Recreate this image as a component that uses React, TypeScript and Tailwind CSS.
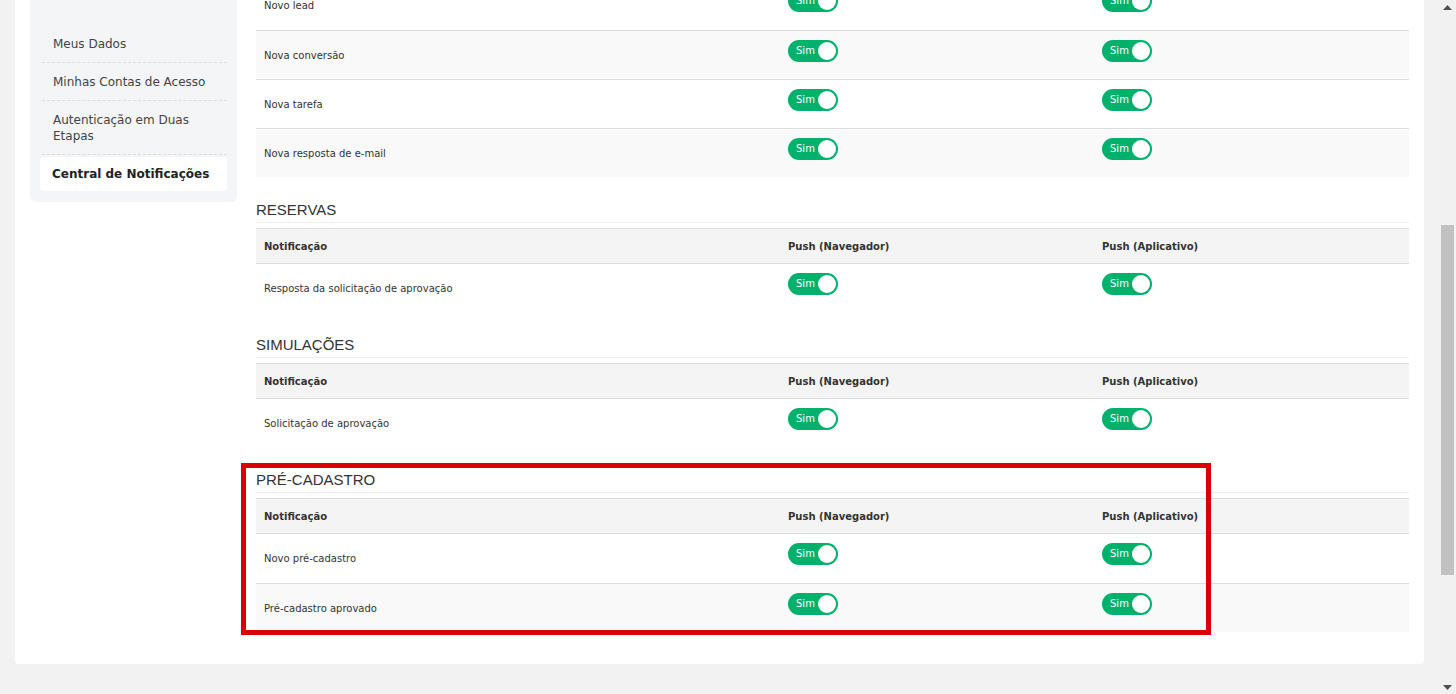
import React from "react"

const body = { fontFamily: "'DejaVu Sans', Verdana, sans-serif" }
const heading = { fontFamily: "'Liberation Sans', Arial, sans-serif" }

type Row = { label: string }

const Toggle = () => (
  <div className="flex h-[22px] w-[50px] items-center justify-between rounded-full bg-[#00b16b] pl-[8px] pr-[2px]">
    <span className="text-[10px] leading-none text-white" style={body}>Sim</span>
    <span className="h-[18px] w-[18px] rounded-full bg-white" />
  </div>
)

const Rows = ({ rows }: { rows: Row[] }) => (
  <>
    {rows.map((r, i) => (
      <div
        key={r.label}
        className={`grid h-[49px] grid-cols-[524px_314px_315px] ${i > 0 ? "border-t border-[#dddddd]" : ""} ${i % 2 === 1 ? "bg-[#f9f9f9]" : "bg-white"}`}
      >
        <div className="pl-[8px] pt-[19px] text-[10px] leading-[12px] text-[#333]" style={body}>
          {r.label}
        </div>
        <div className="pl-[8px] pt-[9px]">
          <Toggle />
        </div>
        <div className="pl-[8px] pt-[9px]">
          <Toggle />
        </div>
      </div>
    ))}
  </>
)

const Section = ({ title, rows, marked, first }: { title: string; rows: Row[]; marked?: boolean; first?: boolean }) => (
  <div className={`relative ${first ? "mt-[21px]" : "mt-[20px]"}`}>
    <h3
      className="border-b border-[#eeeeee] pb-[1px] pt-[1px] text-[15px] leading-[22px] text-[#333]"
      style={heading}
    >
      {title}
    </h3>
    <div className="mt-[5px]">
      <div
        className="grid h-[36px] grid-cols-[524px_314px_315px] items-center border-y border-[#dddddd] bg-[#f4f4f4] text-[10px] font-bold text-[#333]"
        style={body}
      >
        <div className="pl-[8px]">Notificação</div>
        <div className="pl-[8px]">Push (Navegador)</div>
        <div className="pl-[8px]">Push (Aplicativo)</div>
      </div>
      <Rows rows={rows} />
    </div>
    {marked && (
      <div className="pointer-events-none absolute -left-[15px] -top-[5px] h-[172px] w-[970px] border-[5px] border-[#dd0000]" />
    )}
  </div>
)

const menu = ["Meus Dados", "Minhas Contas de Acesso", "Autenticação em Duas Etapas"]

export default function App() {
  return (
    <div className="flex h-[694px] w-[1456px] overflow-hidden bg-[#f2f2f2]">
      <div className="flex-1 px-[15px]">
        <div className="flex items-start gap-[19px] rounded-b-[4px] bg-white px-[15px] pb-[32px]">
          {/* sidebar */}
          <aside className="w-[207px] rounded-b-[6px] bg-[#f4f5f7] px-[10px] pb-[11px] pt-[25px]" style={body}>
            {menu.map((m) => (
              <div
                key={m}
                className="ml-[2px] border-b border-dashed border-[#dcdcdc] py-[10.5px] pl-[11px] pr-[16px] text-[12px] leading-[16px] text-[#444]"
              >
                {m}
              </div>
            ))}
            <div className="mt-[2px] flex h-[34px] items-center rounded-[4px] bg-white pl-[12px] text-[12px] font-bold text-[#222]">
              Central de Notificações
            </div>
          </aside>

          {/* main */}
          <main className="-mt-[19px] w-[1153px]">
            <Rows
              rows={[
                { label: "Novo lead" },
                { label: "Nova conversão" },
                { label: "Nova tarefa" },
                { label: "Nova resposta de e-mail" },
              ]}
            />
            <Section first title="RESERVAS" rows={[{ label: "Resposta da solicitação de aprovação" }]} />
            <Section title="SIMULAÇÕES" rows={[{ label: "Solicitação de aprovação" }]} />
            <Section
              title="PRÉ-CADASTRO"
              marked
              rows={[{ label: "Novo pré-cadastro" }, { label: "Pré-cadastro aprovado" }]}
            />
          </main>
        </div>
      </div>

      {/* scrollbar */}
      <div className="flex w-[17px] flex-col items-center bg-[#f1f1f1]">
        <svg width="9" height="5" viewBox="0 0 9 5" className="mt-[5px]">
          <path d="M0 5 L4.5 0 L9 5 Z" fill="#505050" />
        </svg>
        <div className="mt-[215px] h-[350px] w-[13px] bg-[#c1c1c1]" />
        <div className="flex-1" />
        <svg width="9" height="5" viewBox="0 0 9 5" className="mb-[4px]">
          <path d="M0 0 L9 0 L4.5 5 Z" fill="#505050" />
        </svg>
      </div>
    </div>
  )
}
